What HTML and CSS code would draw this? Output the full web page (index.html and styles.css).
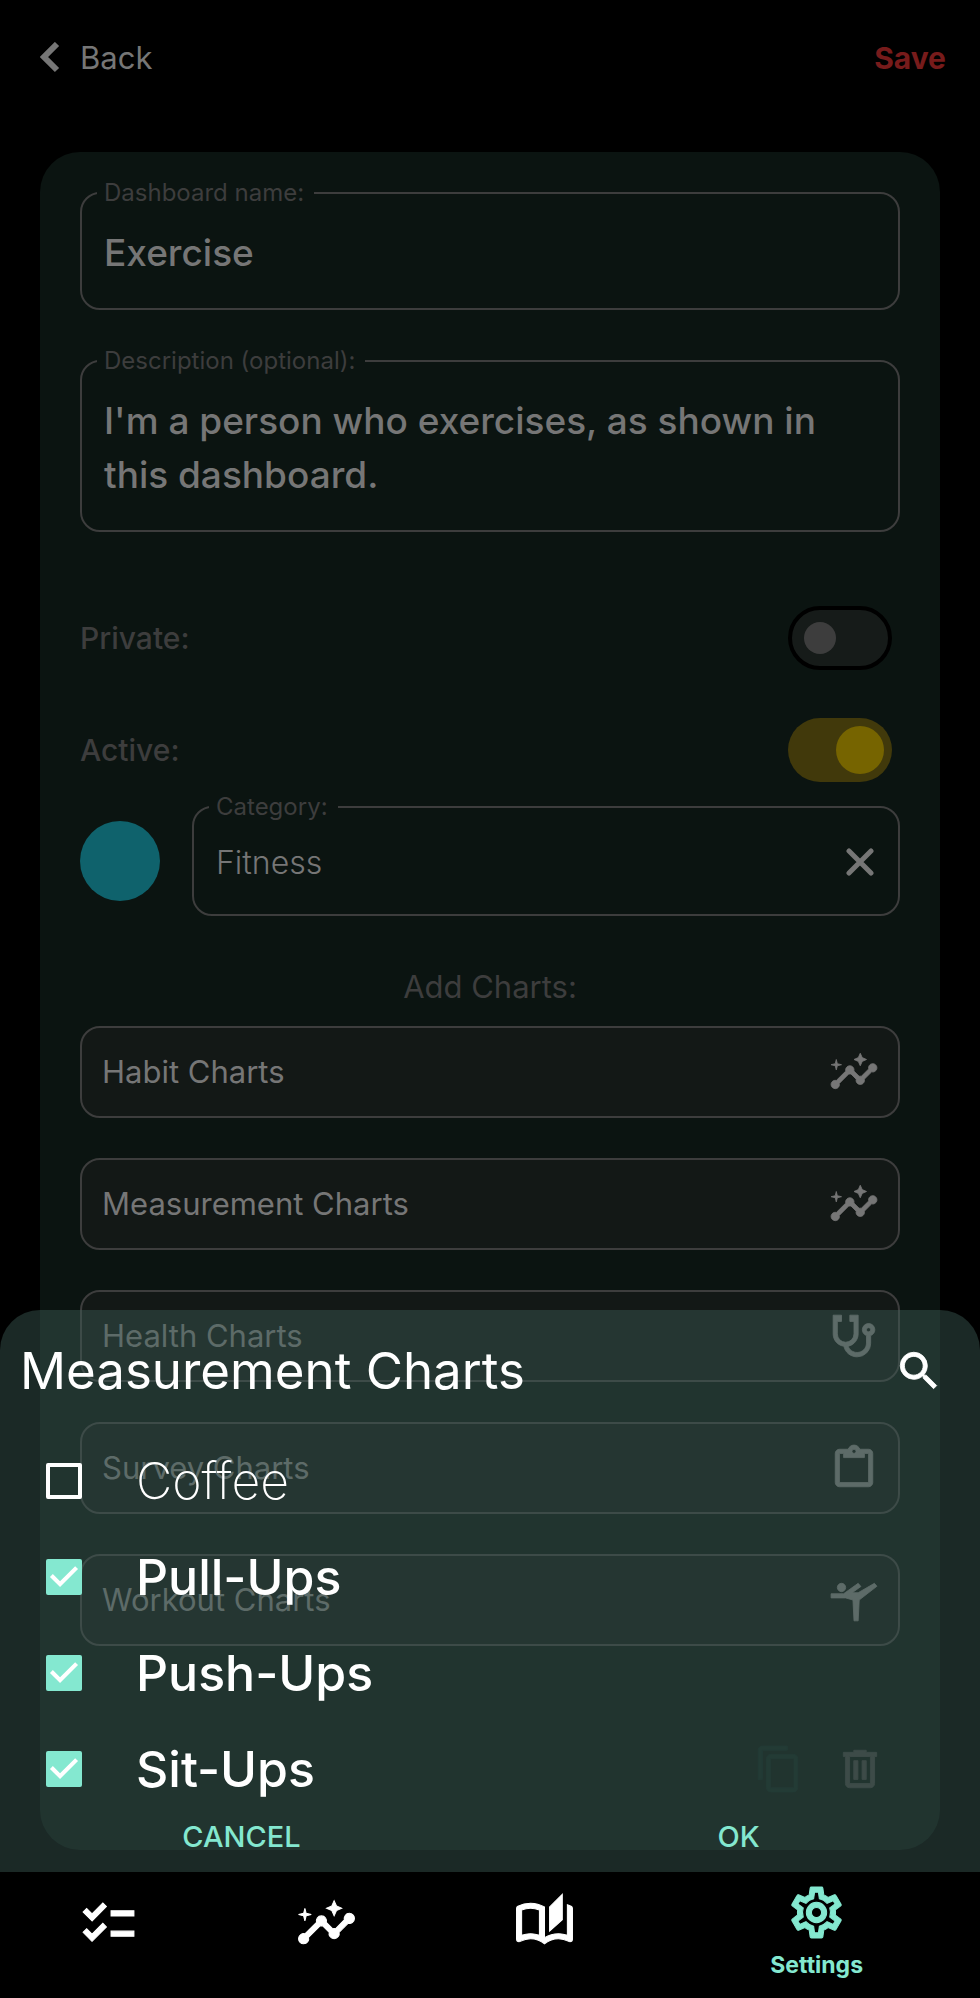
FILE: index.html
```html
<!DOCTYPE html>
<html lang="en">
<head>
<meta charset="utf-8">
<meta name="viewport" content="width=device-width, initial-scale=1">
<title>Edit dashboard</title>
<link rel="stylesheet" href="styles.css">
</head>
<body>
<svg class="sprite" aria-hidden="true">
  <symbol id="insights" viewBox="0 0 24 24"><path d="M21,8c-1.45,0-2.26,1.44-1.93,2.51l-3.55,3.56c-0.3-0.09-0.74-0.09-1.04,0l-2.55-2.55C12.27,10.45,11.46,9,10,9c-1.45,0-2.27,1.44-1.93,2.52l-4.56,4.55C2.44,15.74,1,16.55,1,18c0,1.1,0.9,2,2,2c1.45,0,2.26-1.44,1.93-2.51l4.55-4.56c0.3,0.09,0.74,0.09,1.04,0l2.55,2.55C12.73,16.55,13.54,18,15,18c1.45,0,2.27-1.44,1.93-2.52l3.56-3.55C21.56,12.26,23,11.45,23,10C23,8.9,22.1,8,21,8z M15,9l0.94-2.07L18,6l-2.06-0.93L15,3l-0.92,2.07L12,6l2.08,0.93z M3.5,11L4,9l2-0.5L4,8L3.5,6L3,8L1,8.5L3,9z"/></symbol>
</svg>
<div class="screen">
  <header class="topbar">
    <button class="back" type="button">
      <svg class="chevron" viewBox="0 0 20 32"><path d="M17 2 4 15 17 28" fill="none" stroke="currentColor" stroke-width="6"/></svg>
      Back
    </button>
    <button class="save" type="button">Save</button>
  </header>

  <main class="card">
    <fieldset class="field">
      <legend><label for="name">Dashboard name:</label></legend>
      <input class="control strong" id="name" type="text" value="Exercise">
    </fieldset>
    <fieldset class="field description">
      <legend><label for="desc">Description (optional):</label></legend>
      <textarea class="control strong" id="desc" rows="2">I'm a person who exercises, as shown in this dashboard.</textarea>
    </fieldset>

    <div class="switches">
      <div class="switch-row"><label for="private">Private:</label><input class="switch" id="private" type="checkbox" role="switch"></div>
      <div class="switch-row"><label for="active">Active:</label><input class="switch" id="active" type="checkbox" role="switch" checked></div>
    </div>

    <div class="category">
      <span class="swatch"></span>
      <fieldset class="field">
        <legend><label for="category">Category:</label></legend>
        <div class="with-clear">
          <input class="control light" id="category" type="text" value="Fitness">
          <button class="clear" type="button" aria-label="Clear category"><svg viewBox="0 0 28 28"><path d="M3 3 25 25M25 3 3 25" stroke="currentColor" stroke-width="5" stroke-linecap="round"/></svg></button>
        </div>
      </fieldset>
    </div>

    <h2 class="add-title">Add Charts:</h2>
    <div class="charts">
      <button class="chart" type="button">Habit Charts<svg class="icon"><use href="#insights"/></svg></button>
      <button class="chart" type="button">Measurement Charts<svg class="icon"><use href="#insights"/></svg></button>
      <button class="chart" type="button">Health Charts<svg class="icon" viewBox="0 0 24 24"><path d="M19,8C19.56,8 20,8.43 20,9A1,1 0 0,1 19,10C18.43,10 18,9.55 18,9C18,8.43 18.43,8 19,8M2,2V11C2,13.96 4.19,16.5 7.14,16.91C7.76,19.92 10.42,22 13.5,22A6.5,6.5 0 0,0 20,15.5V11.81C21.16,11.39 22,10.29 22,9A3,3 0 0,0 19,6A3,3 0 0,0 16,9C16,10.29 16.84,11.4 18,11.81V15.41C18,17.91 16,19.91 13.5,19.91C11.5,19.91 9.82,18.7 9.22,16.9C12,16.3 14,13.8 14,11V2H10V5H12V11A4,4 0 0,1 8,15A4,4 0 0,1 4,11V5H6V2H2Z"/></svg></button>
      <button class="chart" type="button">Survey Charts<svg class="icon" viewBox="0 0 24 24"><path d="M19,3H14.82C14.4,1.84 13.3,1 12,1C10.7,1 9.6,1.84 9.18,3H5A2,2 0 0,0 3,5V19A2,2 0 0,0 5,21H19A2,2 0 0,0 21,19V5A2,2 0 0,0 19,3M12,3A1,1 0 0,1 13,4A1,1 0 0,1 12,5A1,1 0 0,1 11,4A1,1 0 0,1 12,3M7,7H17V5H19V19H5V5H7V7Z"/></svg></button>
      <button class="chart" type="button">Workout Charts<svg class="icon" viewBox="0 0 24 24"><path d="M4,6c0-1.1,0.9-2,2-2s2,0.9,2,2S7.1,8,6,8S4,7.1,4,6z M1,9h6l7-5l1.31,1.52L11.14,8.5H14L21.8,4L23,5.4L14.5,12L14,22h-2l-0.5-10L8,11H1V9z"/></svg></button>
    </div>
    <div class="tools">
      <button class="tool copy" type="button" aria-label="Duplicate"><svg class="icon" viewBox="0 0 24 24"><path d="M19,21H8V7H19M19,5H8A2,2 0 0,0 6,7V21A2,2 0 0,0 8,23H19A2,2 0 0,0 21,21V7A2,2 0 0,0 19,5M16,1H4A2,2 0 0,0 2,3V17H4V3H16V1Z"/></svg></button>
      <button class="tool" type="button" aria-label="Delete"><svg class="icon" viewBox="0 0 24 24"><path d="M9,3V4H4V6H5V19A2,2 0 0,0 7,21H17A2,2 0 0,0 19,19V6H20V4H15V3H9M7,6H17V19H7V6M9,8V17H11V8H9M13,8V17H15V8H13Z"/></svg></button>
    </div>
  </main>

  <div class="bottom">
    <section class="sheet" role="dialog" aria-labelledby="sheet-title">
      <div class="sheet-head">
        <h1 id="sheet-title">Measurement Charts</h1>
        <button class="tool search" type="button" aria-label="Search"><svg class="icon" viewBox="0 0 24 24"><path d="M15.5 14h-.79l-.28-.27A6.471 6.471 0 0 0 16 9.5 6.5 6.5 0 1 0 9.5 16c1.61 0 3.09-.59 4.23-1.57l.27.28v.79l5 4.99L20.49 19l-4.99-5zm-6 0C7.01 14 5 11.99 5 9.5S7.01 5 9.5 5 14 7.01 14 9.5 11.99 14 9.5 14z"/></svg></button>
      </div>
      <div class="options">
        <label class="option"><input class="tick" type="checkbox"><span>Coffee</span></label>
        <label class="option"><input class="tick" type="checkbox" checked><span>Pull-Ups</span></label>
        <label class="option"><input class="tick" type="checkbox" checked><span>Push-Ups</span></label>
        <label class="option"><input class="tick" type="checkbox" checked><span>Sit-Ups</span></label>
      </div>
      <div class="actions">
        <button type="button">CANCEL</button>
        <button type="button">OK</button>
      </div>
    </section>
    <nav class="tabs">
      <a href="#" aria-label="Habits"><svg viewBox="0 0 24 24"><path d="M22,7h-9v2h9V7z M22,15h-9v2h9V15z M5.54,11L2,7.46l1.41-1.41l2.12,2.12l4.24-4.24l1.41,1.41L5.54,11z M5.54,19L2,15.46l1.41-1.41l2.12,2.12l4.24-4.24l1.41,1.41L5.54,19z"/></svg></a>
      <a href="#" aria-label="Insights"><svg><use href="#insights"/></svg></a>
      <a href="#" aria-label="Journal"><svg viewBox="0 0 24 24"><path d="M22.47,5.2C22,4.96,21.51,4.76,21,4.59v12.03C19.86,16.21,18.69,16,17.5,16c-1.9,0-3.78,0.54-5.5,1.58V5.48C10.38,4.55,8.51,4,6.5,4C4.71,4,3.02,4.44,1.53,5.2C1.2,5.36,1,5.71,1,6.08v12.08c0,0.58,0.47,0.99,1,0.99c0.16,0,0.32-0.04,0.48-0.12C3.69,18.4,5.05,18,6.5,18c2.07,0,3.98,0.82,5.5,2c1.52-1.18,3.43-2,5.5-2c1.45,0,2.81,0.4,4.02,1.04c0.16,0.08,0.32,0.12,0.48,0.12c0.52,0,1-0.41,1-0.99V6.08C23,5.71,22.8,5.36,22.47,5.2z M10,16.62C8.86,16.21,7.69,16,6.5,16c-1.19,0-2.36,0.21-3.5,0.62V6.71C4.11,6.24,5.28,6,6.5,6C7.7,6,8.89,6.25,10,6.72V16.62z M19,0.5l-5,5V15l5-4.5V0.5z"/></svg></a>
      <a class="current" href="#" aria-current="page"><svg viewBox="0 0 24 24"><path d="M12,8A4,4 0 0,1 16,12A4,4 0 0,1 12,16A4,4 0 0,1 8,12A4,4 0 0,1 12,8M12,10A2,2 0 0,0 10,12A2,2 0 0,0 12,14A2,2 0 0,0 14,12A2,2 0 0,0 12,10M10,22C9.75,22 9.54,21.82 9.5,21.58L9.13,18.93C8.5,18.68 7.96,18.34 7.44,17.94L4.95,18.95C4.73,19.03 4.46,18.95 4.34,18.73L2.34,15.27C2.21,15.05 2.27,14.78 2.46,14.63L4.57,12.97L4.5,12L4.57,11L2.46,9.37C2.27,9.22 2.21,8.95 2.34,8.73L4.34,5.27C4.46,5.05 4.73,4.96 4.95,5.05L7.44,6.05C7.96,5.66 8.5,5.32 9.13,5.07L9.5,2.42C9.54,2.18 9.75,2 10,2H14C14.25,2 14.46,2.18 14.5,2.42L14.87,5.07C15.5,5.32 16.04,5.66 16.56,6.05L19.05,5.05C19.27,4.96 19.54,5.05 19.66,5.27L21.66,8.73C21.79,8.95 21.73,9.22 21.54,9.37L19.43,11L19.5,12L19.43,13L21.54,14.63C21.73,14.78 21.79,15.05 21.66,15.27L19.66,18.73C19.54,18.95 19.27,19.04 19.05,18.95L16.56,17.95C16.04,18.34 15.5,18.68 14.87,18.93L14.5,21.58C14.46,21.82 14.25,22 14,22H10M11.25,4L10.88,6.61C9.68,6.86 8.62,7.5 7.85,8.39L5.44,7.35L4.69,8.65L6.8,10.2C6.4,11.37 6.4,12.64 6.8,13.8L4.68,15.36L5.43,16.66L7.86,15.62C8.63,16.5 9.68,17.14 10.87,17.38L11.24,20H12.76L13.13,17.39C14.32,17.14 15.37,16.5 16.14,15.62L18.57,16.66L19.32,15.36L17.2,13.81C17.6,12.64 17.6,11.37 17.2,10.2L19.31,8.65L18.56,7.35L16.15,8.39C15.38,7.5 14.32,6.86 13.12,6.62L12.75,4H11.25Z"/></svg>Settings</a>
    </nav>
  </div>
</div>
</body>
</html>
```
FILE: styles.css
```css
* {
  box-sizing: border-box;
}

body {
  margin: 0;
  background: #000;
  color: #767676;
  font-family: Inter, "Open Sans", sans-serif;
  font-size: 31px;
  line-height: 40px;
}

button,
input,
textarea {
  margin: 0;
  padding: 0;
  border: 0;
  background: none;
  color: inherit;
  font: inherit;
}

svg {
  display: block;
  fill: currentColor;
}

.sprite {
  display: none;
}

.icon {
  width: 50px;
  height: 50px;
}

.icon,
.tabs svg {
  stroke: currentColor;
  stroke-width: 0.4;
}

.screen {
  position: relative;
  display: flex;
  flex-direction: column;
  min-height: 100vh;
  padding-bottom: 148px;
}

/* Top bar */
.topbar {
  display: flex;
  justify-content: space-between;
  align-items: center;
  height: 116px;
  margin-bottom: 36px;
  padding: 0 34px 0 40px;
}

.back {
  display: flex;
  align-items: center;
  gap: 20px;
}

.chevron {
  width: 20px;
  height: 32px;
}

.save {
  color: #771b1b;
  font-size: 30px;
  font-weight: 700;
}

/* Form card */
.card {
  flex: 1;
  display: flex;
  flex-direction: column;
  margin: 0 40px;
  padding: 26px 40px 56px;
  border-radius: 40px;
  background: #0b1411;
}

.field {
  flex: 1;
  min-width: 0;
  margin: 0;
  padding: 18px 20px 28px 15px;
  border: 2px solid #3d3d3d;
  border-radius: 20px;
}

.card > .field {
  flex: none;
}

.field legend {
  padding: 0 10px 0 7px;
  color: #3d3d3d;
  font-size: 24px;
  line-height: 30px;
}

.control {
  display: block;
  width: 100%;
  height: 54px;
  padding-left: 7px;
  outline: 0;
}

.strong {
  font-size: 37px;
  font-weight: 500;
  line-height: 54px;
}

.description {
  margin-top: 36px;
}

textarea.control {
  height: 108px;
  resize: none;
  overflow: hidden;
}

.light {
  height: 48px;
  font-size: 32px;
  font-weight: 300;
}

.switches {
  display: flex;
  flex-direction: column;
  gap: 48px;
  margin: 74px 8px 10px 0;
}

.switch-row {
  display: flex;
  justify-content: space-between;
  align-items: center;
  color: #3d3d3d;
  font-size: 30px;
  font-weight: 500;
}

.switch {
  appearance: none;
  display: flex;
  align-items: center;
  width: 104px;
  height: 64px;
  padding: 0 12px;
  border: 4px solid #000;
  border-radius: 32px;
  background: #161b19;
}

.switch::before {
  content: "";
  width: 32px;
  height: 32px;
  border-radius: 50%;
  background: #3d3d3d;
}

.switch:checked {
  justify-content: flex-end;
  padding: 0 8px;
  border: 0;
  background: #41390b;
}

.switch:checked::before {
  width: 48px;
  height: 48px;
  background: #766400;
}

.category {
  display: flex;
  align-items: center;
  gap: 32px;
}

.category .field {
  padding-top: 16px;
}

.swatch {
  width: 80px;
  height: 80px;
  margin-top: 14px;
  border-radius: 50%;
  background: #0f626c;
}

.with-clear {
  display: flex;
  align-items: center;
}

.clear {
  padding: 4px;
}

.clear svg {
  width: 28px;
  height: 28px;
}

.add-title {
  margin: 51px 0 19px;
  color: #3d3d3d;
  font-size: 31px;
  font-weight: 400;
  line-height: 40px;
  text-align: center;
}

.charts {
  display: grid;
  gap: 40px;
}

.chart {
  display: flex;
  justify-content: space-between;
  align-items: center;
  height: 92px;
  padding: 0 19px 0 20px;
  border: 2px solid #3d3d3d;
  border-radius: 20px;
  background: #131816;
}

.tools {
  display: flex;
  justify-content: flex-end;
  gap: 31px;
  margin-top: auto;
  padding-right: 15px;
  color: #3d3d3d;
}

.copy {
  color: #0f201c;
}

/* Bottom sheet and tab bar */
.bottom {
  position: absolute;
  right: 0;
  bottom: 0;
  left: 0;
}

.sheet {
  padding-top: 25px;
  border-radius: 40px 40px 0 0;
  background: rgba(61, 93, 86, 0.44);
  color: #fff;
}

.sheet-head {
  display: flex;
  justify-content: space-between;
  align-items: center;
  height: 72px;
  margin-bottom: 26px;
  padding: 0 36px 0 20px;
}

.sheet-head h1 {
  margin: 0;
  font-size: 51px;
  font-weight: 400;
  line-height: 72px;
}

.option {
  display: flex;
  align-items: center;
  gap: 54px;
  height: 96px;
  padding-left: 46px;
  font-size: 50px;
  font-weight: 500;
  line-height: 64px;
}

.option:has(.tick:not(:checked)) {
  font-weight: 200;
}

.tick {
  appearance: none;
  width: 36px;
  height: 36px;
  margin: 0;
  border: 4px solid #fff;
  border-radius: 2px;
}

.tick:checked {
  border: 0;
  background: #84e8d0;
}

.tick:checked::before {
  content: "";
  display: block;
  width: 36px;
  height: 36px;
  background: #fff;
  clip-path: polygon(39% 78%, 11% 50%, 19% 42%, 39% 62%, 81% 20%, 89% 28%);
}

.actions {
  display: flex;
  gap: 14px;
  height: 55px;
  color: #84e8d0;
  font-size: 29px;
  font-weight: 500;
}

.actions button {
  flex: 1;
  height: 40px;
}

.tabs {
  display: grid;
  grid-template-columns: 2fr 2fr 2fr 3fr;
  height: 126px;
  background: #000;
}

.tabs a {
  display: flex;
  flex-direction: column;
  align-items: center;
  padding-top: 21px;
  color: #fff;
  text-decoration: none;
}

.tabs svg {
  width: 61px;
  height: 61px;
}

.tabs .current {
  padding-top: 10px;
  color: #84e8d0;
  font-size: 23px;
  font-weight: 700;
  line-height: 44px;
}
```
